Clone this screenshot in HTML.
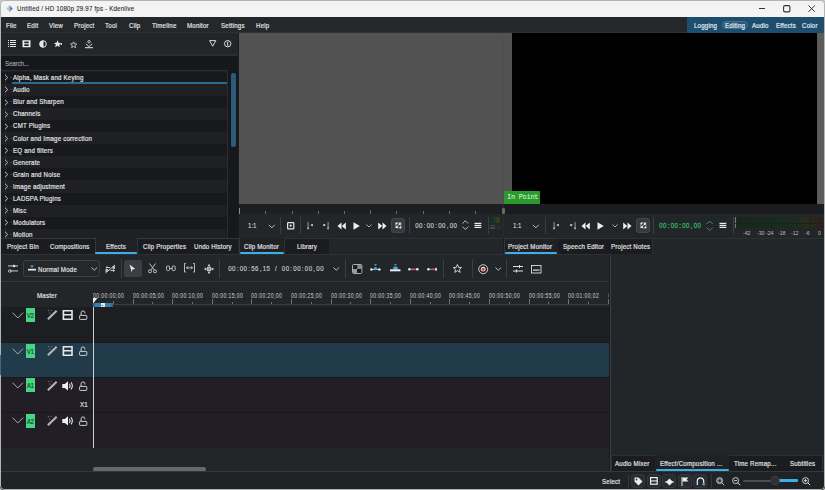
<!DOCTYPE html>
<html><head><meta charset="utf-8">
<style>
*{margin:0;padding:0;box-sizing:border-box}
html{width:825px;height:490px;overflow:hidden;background:#d4d4d4}
body{width:825px;height:490px;overflow:hidden;background:#232629;border-radius:4px;position:relative;font-family:"Liberation Sans",sans-serif;font-size:7px;color:#e8e8e8}
.a{position:absolute}
.t{position:absolute;white-space:pre;line-height:10px;height:10px;transform-origin:0 0}
.m{font-family:"Liberation Mono",monospace}
svg{position:absolute;overflow:visible}
</style></head><body>
<div class="a" style="left:0px;top:0px;width:825px;height:17px;background:#f3f3f3;"></div>
<svg style="left:5px;top:4px;" width="9" height="9" viewBox="0 0 9 9"><path d="M4.2 1.8 L1.4 4.6 L4.2 7.4Z" fill="#9dcaf2"/><path d="M5 1.8 L7.9 4.6 L5 7.4Z" fill="#4f86cc"/><rect x="4.2" y="1" width="0.8" height="7.2" fill="#f0a090"/></svg>
<div class="t" style="left:17.3px;top:4.1px;color:#262626;font-size:8px;letter-spacing:0.24px;transform:scaleX(0.77);-webkit-text-stroke:0.2px currentColor;-webkit-text-stroke:0.1px #262626;">Untitled / HD 1080p 29.97 fps - Kdenlive</div>
<div class="a" style="left:759px;top:8px;width:6px;height:1px;background:#333;"></div>
<svg style="left:783px;top:5px;" width="8" height="8" viewBox="0 0 8 8"><rect x="0.6" y="0.6" width="6.3" height="6.3" rx="1.3" fill="none" stroke="#333" stroke-width="1.1"/></svg>
<svg style="left:808px;top:5px;" width="8" height="8" viewBox="0 0 8 8"><path d="M0.5 0.5 L6.8 6.8 M6.8 0.5 L0.5 6.8" stroke="#333" stroke-width="1"/></svg>
<div class="a" style="left:0px;top:17px;width:825px;height:15px;background:#25282b;"></div>
<div class="a" style="left:0px;top:32px;width:825px;height:1px;background:#2e3134;"></div>
<div class="t" style="left:6px;top:20.8px;color:#e4e4e4;font-size:8px;letter-spacing:0.24px;transform:scaleX(0.77);-webkit-text-stroke:0.2px currentColor;">File</div>
<div class="t" style="left:27px;top:20.8px;color:#e4e4e4;font-size:8px;letter-spacing:0.24px;transform:scaleX(0.77);-webkit-text-stroke:0.2px currentColor;">Edit</div>
<div class="t" style="left:49px;top:20.8px;color:#e4e4e4;font-size:8px;letter-spacing:0.24px;transform:scaleX(0.77);-webkit-text-stroke:0.2px currentColor;">View</div>
<div class="t" style="left:73.5px;top:20.8px;color:#e4e4e4;font-size:8px;letter-spacing:0.24px;transform:scaleX(0.77);-webkit-text-stroke:0.2px currentColor;">Project</div>
<div class="t" style="left:105px;top:20.8px;color:#e4e4e4;font-size:8px;letter-spacing:0.24px;transform:scaleX(0.77);-webkit-text-stroke:0.2px currentColor;">Tool</div>
<div class="t" style="left:128.5px;top:20.8px;color:#e4e4e4;font-size:8px;letter-spacing:0.24px;transform:scaleX(0.77);-webkit-text-stroke:0.2px currentColor;">Clip</div>
<div class="t" style="left:151.5px;top:20.8px;color:#e4e4e4;font-size:8px;letter-spacing:0.24px;transform:scaleX(0.77);-webkit-text-stroke:0.2px currentColor;">Timeline</div>
<div class="t" style="left:187px;top:20.8px;color:#e4e4e4;font-size:8px;letter-spacing:0.24px;transform:scaleX(0.77);-webkit-text-stroke:0.2px currentColor;">Monitor</div>
<div class="t" style="left:221px;top:20.8px;color:#e4e4e4;font-size:8px;letter-spacing:0.24px;transform:scaleX(0.77);-webkit-text-stroke:0.2px currentColor;">Settings</div>
<div class="t" style="left:256px;top:20.8px;color:#e4e4e4;font-size:8px;letter-spacing:0.24px;transform:scaleX(0.77);-webkit-text-stroke:0.2px currentColor;">Help</div>
<div class="a" style="left:687px;top:17px;width:138px;height:15.5px;background:#1d4e6d;"></div>
<div class="a" style="left:722.3px;top:21.3px;width:25.3px;height:8.2px;background:#285a79;border:1px solid #41718f;border-radius:4px"></div>
<div class="t" style="left:694px;top:20.6px;color:#e6eef3;font-size:8px;letter-spacing:0.24px;transform:scaleX(0.77);-webkit-text-stroke:0.2px currentColor;">Logging</div>
<div class="t" style="left:725px;top:20.6px;color:#e6eef3;font-size:8px;letter-spacing:0.24px;transform:scaleX(0.77);-webkit-text-stroke:0.2px currentColor;">Editing</div>
<div class="t" style="left:752px;top:20.6px;color:#e6eef3;font-size:8px;letter-spacing:0.24px;transform:scaleX(0.77);-webkit-text-stroke:0.2px currentColor;">Audio</div>
<div class="t" style="left:776px;top:20.6px;color:#e6eef3;font-size:8px;letter-spacing:0.24px;transform:scaleX(0.77);-webkit-text-stroke:0.2px currentColor;">Effects</div>
<div class="t" style="left:802px;top:20.6px;color:#e6eef3;font-size:8px;letter-spacing:0.24px;transform:scaleX(0.77);-webkit-text-stroke:0.2px currentColor;">Color</div>
<div class="a" style="left:0px;top:33px;width:238px;height:21px;background:#232629;"></div>
<div class="a" style="left:0px;top:54px;width:238px;height:17px;background:#2a2d31;border-radius:2px"></div>
<div class="a" style="left:1px;top:55.5px;width:237px;height:14px;background:#16171a;border-radius:2px"></div>
<div class="t" style="left:5px;top:58.6px;color:#9a9fa4;font-size:8px;letter-spacing:0.24px;transform:scaleX(0.77);-webkit-text-stroke:0.2px currentColor;letter-spacing:-0.15px;">Search...</div>
<div class="a" style="left:0px;top:71px;width:238px;height:167px;background:#1e1f22;"></div>
<div class="a" style="left:0px;top:71.5px;width:227px;height:12.3px;background:#18191c;"></div>
<div class="a" style="left:0px;top:83.6px;width:227px;height:12.3px;background:#1f2023;"></div>
<div class="a" style="left:0px;top:95.7px;width:227px;height:12.3px;background:#18191c;"></div>
<div class="a" style="left:0px;top:107.8px;width:227px;height:12.3px;background:#1f2023;"></div>
<div class="a" style="left:0px;top:119.9px;width:227px;height:12.3px;background:#18191c;"></div>
<div class="a" style="left:0px;top:132.0px;width:227px;height:12.3px;background:#1f2023;"></div>
<div class="a" style="left:0px;top:144.1px;width:227px;height:12.3px;background:#18191c;"></div>
<div class="a" style="left:0px;top:156.2px;width:227px;height:12.3px;background:#1f2023;"></div>
<div class="a" style="left:0px;top:168.3px;width:227px;height:12.3px;background:#18191c;"></div>
<div class="a" style="left:0px;top:180.4px;width:227px;height:12.3px;background:#1f2023;"></div>
<div class="a" style="left:0px;top:192.5px;width:227px;height:12.3px;background:#18191c;"></div>
<div class="a" style="left:0px;top:204.6px;width:227px;height:12.3px;background:#1f2023;"></div>
<div class="a" style="left:0px;top:216.7px;width:227px;height:12.3px;background:#18191c;"></div>
<div class="a" style="left:0px;top:228.8px;width:227px;height:12.3px;background:#1f2023;"></div>
<div class="a" style="left:5px;top:71px;width:1px;height:167px;background:;background:repeating-linear-gradient(180deg,#34373a 0 1px,transparent 1px 2px)"></div>
<svg style="left:4px;top:74.34px;" width="5" height="7" viewBox="0 0 5 7"><path d="M1 0.8 L3.8 3.5 L1 6.2" fill="none" stroke="#c8c8c8" stroke-width="0.9"/></svg>
<div class="a" style="left:10px;top:77.1px;width:2px;height:1px;background:#3a3c3f;"></div>
<div class="t" style="left:13px;top:73.14px;color:#e6e6e6;font-size:8px;letter-spacing:0.24px;transform:scaleX(0.77);-webkit-text-stroke:0.2px currentColor;">Alpha, Mask and Keying</div>
<svg style="left:4px;top:86.42px;" width="5" height="7" viewBox="0 0 5 7"><path d="M1 0.8 L3.8 3.5 L1 6.2" fill="none" stroke="#c8c8c8" stroke-width="0.9"/></svg>
<div class="a" style="left:10px;top:89.2px;width:2px;height:1px;background:#3a3c3f;"></div>
<div class="t" style="left:13px;top:85.22px;color:#e6e6e6;font-size:8px;letter-spacing:0.24px;transform:scaleX(0.77);-webkit-text-stroke:0.2px currentColor;">Audio</div>
<svg style="left:4px;top:98.5px;" width="5" height="7" viewBox="0 0 5 7"><path d="M1 0.8 L3.8 3.5 L1 6.2" fill="none" stroke="#c8c8c8" stroke-width="0.9"/></svg>
<div class="a" style="left:10px;top:101.3px;width:2px;height:1px;background:#3a3c3f;"></div>
<div class="t" style="left:13px;top:97.3px;color:#e6e6e6;font-size:8px;letter-spacing:0.24px;transform:scaleX(0.77);-webkit-text-stroke:0.2px currentColor;">Blur and Sharpen</div>
<svg style="left:4px;top:110.58px;" width="5" height="7" viewBox="0 0 5 7"><path d="M1 0.8 L3.8 3.5 L1 6.2" fill="none" stroke="#c8c8c8" stroke-width="0.9"/></svg>
<div class="a" style="left:10px;top:113.4px;width:2px;height:1px;background:#3a3c3f;"></div>
<div class="t" style="left:13px;top:109.38px;color:#e6e6e6;font-size:8px;letter-spacing:0.24px;transform:scaleX(0.77);-webkit-text-stroke:0.2px currentColor;">Channels</div>
<svg style="left:4px;top:122.66000000000001px;" width="5" height="7" viewBox="0 0 5 7"><path d="M1 0.8 L3.8 3.5 L1 6.2" fill="none" stroke="#c8c8c8" stroke-width="0.9"/></svg>
<div class="a" style="left:10px;top:125.5px;width:2px;height:1px;background:#3a3c3f;"></div>
<div class="t" style="left:13px;top:121.46px;color:#e6e6e6;font-size:8px;letter-spacing:0.24px;transform:scaleX(0.77);-webkit-text-stroke:0.2px currentColor;">CMT Plugins</div>
<svg style="left:4px;top:134.73999999999998px;" width="5" height="7" viewBox="0 0 5 7"><path d="M1 0.8 L3.8 3.5 L1 6.2" fill="none" stroke="#c8c8c8" stroke-width="0.9"/></svg>
<div class="a" style="left:10px;top:137.5px;width:2px;height:1px;background:#3a3c3f;"></div>
<div class="t" style="left:13px;top:133.54px;color:#e6e6e6;font-size:8px;letter-spacing:0.24px;transform:scaleX(0.77);-webkit-text-stroke:0.2px currentColor;">Color and Image correction</div>
<svg style="left:4px;top:146.82px;" width="5" height="7" viewBox="0 0 5 7"><path d="M1 0.8 L3.8 3.5 L1 6.2" fill="none" stroke="#c8c8c8" stroke-width="0.9"/></svg>
<div class="a" style="left:10px;top:149.6px;width:2px;height:1px;background:#3a3c3f;"></div>
<div class="t" style="left:13px;top:145.62px;color:#e6e6e6;font-size:8px;letter-spacing:0.24px;transform:scaleX(0.77);-webkit-text-stroke:0.2px currentColor;">EQ and filters</div>
<svg style="left:4px;top:158.89999999999998px;" width="5" height="7" viewBox="0 0 5 7"><path d="M1 0.8 L3.8 3.5 L1 6.2" fill="none" stroke="#c8c8c8" stroke-width="0.9"/></svg>
<div class="a" style="left:10px;top:161.7px;width:2px;height:1px;background:#3a3c3f;"></div>
<div class="t" style="left:13px;top:157.7px;color:#e6e6e6;font-size:8px;letter-spacing:0.24px;transform:scaleX(0.77);-webkit-text-stroke:0.2px currentColor;">Generate</div>
<svg style="left:4px;top:170.98px;" width="5" height="7" viewBox="0 0 5 7"><path d="M1 0.8 L3.8 3.5 L1 6.2" fill="none" stroke="#c8c8c8" stroke-width="0.9"/></svg>
<div class="a" style="left:10px;top:173.8px;width:2px;height:1px;background:#3a3c3f;"></div>
<div class="t" style="left:13px;top:169.78px;color:#e6e6e6;font-size:8px;letter-spacing:0.24px;transform:scaleX(0.77);-webkit-text-stroke:0.2px currentColor;">Grain and Noise</div>
<svg style="left:4px;top:183.06px;" width="5" height="7" viewBox="0 0 5 7"><path d="M1 0.8 L3.8 3.5 L1 6.2" fill="none" stroke="#c8c8c8" stroke-width="0.9"/></svg>
<div class="a" style="left:10px;top:185.9px;width:2px;height:1px;background:#3a3c3f;"></div>
<div class="t" style="left:13px;top:181.86px;color:#e6e6e6;font-size:8px;letter-spacing:0.24px;transform:scaleX(0.77);-webkit-text-stroke:0.2px currentColor;">Image adjustment</div>
<svg style="left:4px;top:195.14px;" width="5" height="7" viewBox="0 0 5 7"><path d="M1 0.8 L3.8 3.5 L1 6.2" fill="none" stroke="#c8c8c8" stroke-width="0.9"/></svg>
<div class="a" style="left:10px;top:197.9px;width:2px;height:1px;background:#3a3c3f;"></div>
<div class="t" style="left:13px;top:193.94px;color:#e6e6e6;font-size:8px;letter-spacing:0.24px;transform:scaleX(0.77);-webkit-text-stroke:0.2px currentColor;">LADSPA Plugins</div>
<svg style="left:4px;top:207.21999999999997px;" width="5" height="7" viewBox="0 0 5 7"><path d="M1 0.8 L3.8 3.5 L1 6.2" fill="none" stroke="#c8c8c8" stroke-width="0.9"/></svg>
<div class="a" style="left:10px;top:210.0px;width:2px;height:1px;background:#3a3c3f;"></div>
<div class="t" style="left:13px;top:206.02px;color:#e6e6e6;font-size:8px;letter-spacing:0.24px;transform:scaleX(0.77);-webkit-text-stroke:0.2px currentColor;">Misc</div>
<svg style="left:4px;top:219.3px;" width="5" height="7" viewBox="0 0 5 7"><path d="M1 0.8 L3.8 3.5 L1 6.2" fill="none" stroke="#c8c8c8" stroke-width="0.9"/></svg>
<div class="a" style="left:10px;top:222.1px;width:2px;height:1px;background:#3a3c3f;"></div>
<div class="t" style="left:13px;top:218.1px;color:#e6e6e6;font-size:8px;letter-spacing:0.24px;transform:scaleX(0.77);-webkit-text-stroke:0.2px currentColor;">Modulators</div>
<svg style="left:4px;top:231.38px;" width="5" height="7" viewBox="0 0 5 7"><path d="M1 0.8 L3.8 3.5 L1 6.2" fill="none" stroke="#c8c8c8" stroke-width="0.9"/></svg>
<div class="a" style="left:10px;top:234.2px;width:2px;height:1px;background:#3a3c3f;"></div>
<div class="t" style="left:13px;top:230.18px;color:#e6e6e6;font-size:8px;letter-spacing:0.24px;transform:scaleX(0.77);-webkit-text-stroke:0.2px currentColor;">Motion</div>
<div class="a" style="left:11.5px;top:82px;width:216px;height:2px;background:#2d6b93;"></div>
<div class="a" style="left:228px;top:70px;width:10px;height:168px;background:#17181b;"></div>
<div class="a" style="left:227px;top:70px;width:1px;height:168px;background:#2a2c2f;"></div>
<div class="a" style="left:231px;top:73px;width:4.5px;height:74px;background:#2b5a7a;border-radius:2px"></div>
<div class="a" style="left:0px;top:238px;width:238px;height:16px;background:#1b1c1f;"></div>
<div class="a" style="left:0px;top:238px;width:238px;height:1px;background:#33363a;"></div>
<div class="a" style="left:94.5px;top:238px;width:43px;height:16px;background:#1f2124;border-left:1px solid #33363a;border-right:1px solid #33363a"></div>
<div class="a" style="left:95px;top:252px;width:42px;height:2px;background:#3daee9;border-radius:1px"></div>
<div class="t" style="left:6.5px;top:241.5px;color:#e4e4e4;font-size:8px;letter-spacing:0.24px;transform:scaleX(0.77);-webkit-text-stroke:0.2px currentColor;">Project Bin</div>
<div class="t" style="left:49.5px;top:241.5px;color:#e4e4e4;font-size:8px;letter-spacing:0.24px;transform:scaleX(0.77);-webkit-text-stroke:0.2px currentColor;">Compositions</div>
<div class="t" style="left:106.2px;top:241.5px;color:#e4e4e4;font-size:8px;letter-spacing:0.24px;transform:scaleX(0.77);-webkit-text-stroke:0.2px currentColor;">Effects</div>
<div class="t" style="left:142.5px;top:241.5px;color:#e4e4e4;font-size:8px;letter-spacing:0.24px;transform:scaleX(0.77);-webkit-text-stroke:0.2px currentColor;">Clip Properties</div>
<div class="t" style="left:193.5px;top:241.5px;color:#e4e4e4;font-size:8px;letter-spacing:0.24px;transform:scaleX(0.77);-webkit-text-stroke:0.2px currentColor;">Undo History</div>
<div class="a" style="left:238px;top:33px;width:1px;height:205px;background:#1b1c1f;"></div>
<div class="a" style="left:239px;top:33px;width:273px;height:171px;background:#525252;"></div>
<div class="a" style="left:503px;top:33px;width:1px;height:171px;background:#4f4f4f;"></div>
<div class="a" style="left:512px;top:33px;width:305px;height:171px;background:#000;"></div>
<div class="a" style="left:817px;top:33px;width:8px;height:171px;background:#5c5c5c;"></div>
<div class="a" style="left:239px;top:204px;width:264px;height:10px;background:#1d1f22;"></div>
<div class="a" style="left:504px;top:204px;width:321px;height:10px;background:#1b1c1f;"></div>
<div class="a" style="left:265px;top:211.0px;width:1px;height:2.5px;background:#66686b;"></div>
<div class="a" style="left:292px;top:211.0px;width:1px;height:2.5px;background:#66686b;"></div>
<div class="a" style="left:318px;top:211.0px;width:1px;height:2.5px;background:#66686b;"></div>
<div class="a" style="left:344px;top:211.0px;width:1px;height:2.5px;background:#66686b;"></div>
<div class="a" style="left:370px;top:209.5px;width:1px;height:4px;background:#66686b;"></div>
<div class="a" style="left:396px;top:211.0px;width:1px;height:2.5px;background:#66686b;"></div>
<div class="a" style="left:423px;top:211.0px;width:1px;height:2.5px;background:#66686b;"></div>
<div class="a" style="left:449px;top:211.0px;width:1px;height:2.5px;background:#66686b;"></div>
<div class="a" style="left:475px;top:211.0px;width:1px;height:2.5px;background:#66686b;"></div>
<div class="a" style="left:239px;top:208px;width:1px;height:6px;background:#8a8a8a;"></div>
<div class="a" style="left:503px;top:204px;width:1px;height:34px;background:#2a2c30;"></div>
<div class="a" style="left:502px;top:208px;width:3px;height:5.5px;background:#6a6a6a;border-radius:1.2px"></div>
<div class="a" style="left:504px;top:191px;width:36px;height:13px;background:#2a9a2a;"></div>
<div class="t m" style="left:507px;top:192.3px;color:#e8f5e8;font-size:7px;letter-spacing:-0.3px;">In Point</div>
<div class="a" style="left:239px;top:214px;width:264px;height:24px;background:#232629;"></div>
<div class="a" style="left:504px;top:214px;width:321px;height:24px;background:#232629;"></div>
<div class="t" style="left:248.2px;top:221.4px;color:#e0e0e0;font-size:8px;letter-spacing:0px;transform:scaleX(0.76);-webkit-text-stroke:0.05px #e0e0e0;">1:1</div>
<svg style="left:268px;top:223.5px;" width="8" height="5" viewBox="0 0 8 5"><path d="M0.8 0.8 L3.8 3.8 L6.8 0.8" fill="none" stroke="#cfcfcf" stroke-width="0.9"/></svg>
<div class="a" style="left:280px;top:217px;width:1px;height:17px;background:#3a3d41;"></div>
<svg style="left:286.8px;top:222px;" width="8" height="8" viewBox="0 0 8 8"><rect x="0.6" y="0.6" width="6.2" height="6.2" rx="0.6" fill="none" stroke="#e4e4e4" stroke-width="1.2"/><rect x="2.6" y="2.6" width="2" height="2" fill="#e4e4e4"/></svg>
<div class="a" style="left:300px;top:217px;width:1px;height:17px;background:#3a3d41;"></div>
<div class="a" style="left:0px;top:254px;width:610px;height:1px;background:#2e3134;"></div>
<div class="a" style="left:0px;top:255px;width:610px;height:26px;background:#232629;"></div>
<div class="a" style="left:0px;top:281px;width:610px;height:1px;background:#34373b;"></div>
<svg style="left:8px;top:40px;" width="8" height="8" viewBox="0 0 8 8"><rect x="0" y="0" width="1" height="1" fill="#e8e8e8"/><rect x="2" y="0" width="6" height="1" fill="#e8e8e8"/><rect x="0" y="2" width="1" height="1" fill="#e8e8e8"/><rect x="2" y="2" width="6" height="1" fill="#e8e8e8"/><rect x="0" y="4" width="1" height="1" fill="#e8e8e8"/><rect x="2" y="4" width="6" height="1" fill="#e8e8e8"/><rect x="0" y="6" width="1" height="1" fill="#e8e8e8"/><rect x="2" y="6" width="6" height="1" fill="#e8e8e8"/></svg>
<svg style="left:22px;top:40px;" width="9" height="8" viewBox="0 0 9 8"><path fill-rule="evenodd" fill="#eee" d="M0.5 0.2 H8.5 V7.2 H0.5Z M2.3 1.4 H6.7 V3.2 H2.3Z M2.3 4.2 H6.7 V6 H2.3Z"/></svg>
<svg style="left:39px;top:40px;" width="8" height="8" viewBox="0 0 8 8"><circle cx="4" cy="4" r="3.3" fill="none" stroke="#e8e8e8" stroke-width="1"/><path d="M4 0.7 A3.3 3.3 0 0 0 4 7.3Z" fill="#e8e8e8"/><rect x="3.6" y="0.7" width="0.9" height="6.6" fill="#e8e8e8"/></svg>
<svg style="left:54px;top:40px;" width="8" height="8" viewBox="0 0 8 8"><path d="M3.5 0.3 L4.5 2.8 L7.2 2.9 L5.1 4.6 L5.9 7.3 L3.5 5.8 L1.1 7.3 L1.9 4.6 L-0.2 2.9 L2.5 2.8Z" fill="#e8e8e8"/><path d="M5 4 L8 4 L7 3 M8 4 L7 5" stroke="#e8e8e8" stroke-width="0.8" fill="none"/></svg>
<svg style="left:69.5px;top:40.5px;" width="8" height="8" viewBox="0 0 8 8"><path d="M3.6 0.8 L4.5 2.9 L6.7 3 L5 4.4 L5.6 6.7 L3.6 5.4 L1.6 6.7 L2.2 4.4 L0.5 3 L2.7 2.9Z" fill="none" stroke="#d8d8d8" stroke-width="0.8"/></svg>
<svg style="left:85px;top:39.5px;" width="8" height="9" viewBox="0 0 8 9"><circle cx="4" cy="1.7" r="1.2" fill="none" stroke="#e8e8e8" stroke-width="0.8"/><path d="M0.8 3.8 L4 6.6 L7.2 3.8" fill="none" stroke="#e8e8e8" stroke-width="0.9"/><rect x="0" y="7.2" width="8" height="1" fill="#e8e8e8"/></svg>
<svg style="left:209px;top:40px;" width="8" height="7" viewBox="0 0 8 7"><path d="M0.6 0.6 L6.8 0.6 L3.7 6.2Z" fill="none" stroke="#e8e8e8" stroke-width="0.9" stroke-linejoin="round"/></svg>
<svg style="left:224px;top:40px;" width="8" height="8" viewBox="0 0 8 8"><circle cx="3.7" cy="3.7" r="3.2" fill="none" stroke="#e8e8e8" stroke-width="0.9"/><rect x="3.2" y="1.6" width="1" height="4.2" fill="#e8e8e8"/></svg>
<div class="a" style="left:239px;top:238px;width:586px;height:16px;background:#232629;"></div>
<div class="a" style="left:284px;top:238px;width:45px;height:16px;background:#1b1c1f;border-top:1px solid #2e3134;border-left:1px solid #2e3134"></div>
<div class="a" style="left:558px;top:238px;width:95px;height:16px;background:#1b1c1f;border-top:1px solid #2e3134;border-right:1px solid #2e3134"></div>
<div class="a" style="left:284px;top:238px;width:219px;height:1px;background:#2e3134;"></div>
<div class="a" style="left:558px;top:238px;width:267px;height:1px;background:#2e3134;"></div>
<div class="a" style="left:239px;top:238px;width:45px;height:16px;background:#1f2124;border-left:1px solid #33363a"></div>
<div class="a" style="left:239.5px;top:252px;width:44.5px;height:2px;background:#3daee9;border-radius:1px"></div>
<div class="t" style="left:243.6px;top:241.7px;color:#e4e4e4;font-size:8px;letter-spacing:0.24px;transform:scaleX(0.77);-webkit-text-stroke:0.2px currentColor;">Clip Monitor</div>
<div class="t" style="left:297px;top:241.7px;color:#e4e4e4;font-size:8px;letter-spacing:0.24px;transform:scaleX(0.77);-webkit-text-stroke:0.2px currentColor;">Library</div>
<div class="a" style="left:503px;top:238px;width:1px;height:16px;background:#1b1c1f;"></div>
<div class="a" style="left:504px;top:238px;width:54px;height:16px;background:#1f2124;border-left:1px solid #33363a;border-top:1px solid #33363a"></div>
<div class="a" style="left:504.5px;top:252px;width:52.5px;height:2px;background:#3daee9;border-radius:1px"></div>
<div class="t" style="left:508px;top:241.7px;color:#e4e4e4;font-size:8px;letter-spacing:0.24px;transform:scaleX(0.77);-webkit-text-stroke:0.2px currentColor;">Project Monitor</div>
<div class="t" style="left:562.5px;top:241.7px;color:#e4e4e4;font-size:8px;letter-spacing:0.24px;transform:scaleX(0.77);-webkit-text-stroke:0.2px currentColor;">Speech Editor</div>
<div class="t" style="left:611px;top:241.7px;color:#e4e4e4;font-size:8px;letter-spacing:0.24px;transform:scaleX(0.77);-webkit-text-stroke:0.2px currentColor;">Project Notes</div>
<svg style="left:306px;top:221px;" width="8" height="10" viewBox="0 0 8 10"><rect x="1.6" y="1" width="1" height="6.5" fill="#9a9a9a"/><circle cx="2.1" cy="7.3" r="1.1" fill="#a8a8a8"/><path d="M4.2 4.1 L6.6 2.9 L6.6 5.3Z" fill="#c8c8c8"/><circle cx="6.2" cy="4.1" r="0.9" fill="#c8c8c8"/></svg>
<svg style="left:322px;top:221px;" width="8" height="10" viewBox="0 0 8 10"><rect x="5.6" y="1" width="1" height="6.5" fill="#9a9a9a"/><circle cx="6.1" cy="7.3" r="1.1" fill="#a8a8a8"/><path d="M4 4.1 L1.6 2.9 L1.6 5.3Z" fill="#d0d0d0"/><circle cx="2" cy="4.1" r="0.9" fill="#d0d0d0"/></svg>
<svg style="left:337px;top:221.5px;" width="9" height="8" viewBox="0 0 9 8"><path d="M4.5 0.5 L0.5 4 L4.5 7.5Z M8.8 0.5 L4.8 4 L8.8 7.5Z" fill="#f0f0f0"/></svg>
<svg style="left:353px;top:221.5px;" width="7" height="8" viewBox="0 0 7 8"><path d="M0.5 0.3 L6.8 4 L0.5 7.7Z" fill="#f0f0f0"/></svg>
<svg style="left:366px;top:223.8px;" width="6" height="4" viewBox="0 0 6 4"><path d="M0.5 0.5 L3 3 L5.5 0.5" fill="none" stroke="#cfcfcf" stroke-width="0.8"/></svg>
<svg style="left:378.4px;top:221.5px;" width="9" height="8" viewBox="0 0 9 8"><path d="M0.2 0.5 L4.2 4 L0.2 7.5Z M4.5 0.5 L8.5 4 L4.5 7.5Z" fill="#f0f0f0"/></svg>
<div class="a" style="left:391px;top:218.3px;width:14.2px;height:14.3px;background:#36393d;border:1px solid #44474b;border-radius:3px"></div>
<svg style="left:394.5px;top:221.8px;" width="8" height="8" viewBox="0 0 8 8"><path d="M0.8 1.2 L0.8 5.8 L5.8 5.8 L5.8 0.8 L1.2 0.8" fill="none" stroke="#bdbdbd" stroke-width="0.7"/><path d="M0.8 5.8 L6 0.6" stroke="#ddd" stroke-width="0.8"/><circle cx="1.5" cy="1.5" r="1" fill="#eee"/><circle cx="5.5" cy="5.6" r="1" fill="#eee"/><circle cx="2" cy="5" r="0.9" fill="#fff"/><circle cx="4.8" cy="2" r="0.9" fill="#fff"/></svg>
<div class="a" style="left:409px;top:217px;width:1px;height:17px;background:#3a3d41;"></div>
<div class="t" style="left:414.6px;top:221.4px;color:#cfcfcf;font-size:7.4px;transform:scaleX(0.82);-webkit-text-stroke:0.15px #cfcfcf;"><span style="display:inline-block;width:4.683px;text-align:center">0</span><span style="display:inline-block;width:4.683px;text-align:center">0</span><span style="display:inline-block;width:4.683px;text-align:center">:</span><span style="display:inline-block;width:4.683px;text-align:center">0</span><span style="display:inline-block;width:4.683px;text-align:center">0</span><span style="display:inline-block;width:4.683px;text-align:center">:</span><span style="display:inline-block;width:4.683px;text-align:center">0</span><span style="display:inline-block;width:4.683px;text-align:center">0</span><span style="display:inline-block;width:4.683px;text-align:center">,</span><span style="display:inline-block;width:4.683px;text-align:center">0</span><span style="display:inline-block;width:4.683px;text-align:center">0</span></div>
<svg style="left:461.5px;top:220px;" width="7" height="11" viewBox="0 0 7 11"><path d="M0.5 3.5 L3.3 0.7 L6.1 3.5 M0.5 6.7 L3.3 9.5 L6.1 6.7" fill="none" stroke="#d0d0d0" stroke-width="0.9"/></svg>
<svg style="left:474px;top:221px;" width="8" height="8" viewBox="0 0 8 8"><rect x="0.5" y="1.8" width="6.8" height="1.2" fill="#eee"/><rect x="0.5" y="3.8" width="6.8" height="1.2" fill="#eee"/><rect x="0.5" y="5.8" width="6.8" height="1.2" fill="#eee"/></svg>
<div class="a" style="left:488px;top:217px;width:1px;height:17px;background:#3a3d41;"></div>
<div class="a" style="left:491.4px;top:217.4px;width:8.6px;height:5.2px;background:;background:linear-gradient(90deg,#1a2e20,#1c4024 60%,#3a4220 80%,#4a2420)"></div>
<div class="a" style="left:490.2px;top:225px;width:5px;height:1px;background:#45484b;"></div>
<div class="a" style="left:490.2px;top:226.5px;width:5px;height:1px;background:#45484b;"></div>
<div class="a" style="left:490.2px;top:228px;width:5px;height:1px;background:#45484b;"></div>
<svg style="left:496.5px;top:225px;" width="4" height="5" viewBox="0 0 4 5"><ellipse cx="2" cy="2.3" rx="1.4" ry="1.8" fill="none" stroke="#3c3f42" stroke-width="0.7"/></svg>
<div class="t" style="left:512.8px;top:221.4px;color:#e0e0e0;font-size:8px;letter-spacing:0px;transform:scaleX(0.76);-webkit-text-stroke:0.05px #e0e0e0;">1:1</div>
<svg style="left:532.3px;top:223.5px;" width="8" height="5" viewBox="0 0 8 5"><path d="M0.8 0.8 L3.8 3.8 L6.8 0.8" fill="none" stroke="#cfcfcf" stroke-width="0.9"/></svg>
<div class="a" style="left:545px;top:217px;width:1px;height:17px;background:#3a3d41;"></div>
<svg style="left:552px;top:221px;" width="8" height="10" viewBox="0 0 8 10"><rect x="1.6" y="1" width="1" height="6.5" fill="#9a9a9a"/><circle cx="2.1" cy="7.3" r="1.1" fill="#a8a8a8"/><path d="M4.2 4.1 L6.6 2.9 L6.6 5.3Z" fill="#c8c8c8"/><circle cx="6.2" cy="4.1" r="0.9" fill="#c8c8c8"/></svg>
<svg style="left:569px;top:221px;" width="8" height="10" viewBox="0 0 8 10"><rect x="5.6" y="1" width="1" height="6.5" fill="#9a9a9a"/><circle cx="6.1" cy="7.3" r="1.1" fill="#a8a8a8"/><path d="M4 4.1 L1.6 2.9 L1.6 5.3Z" fill="#d0d0d0"/><circle cx="2" cy="4.1" r="0.9" fill="#d0d0d0"/></svg>
<svg style="left:581px;top:221.5px;" width="9" height="8" viewBox="0 0 9 8"><path d="M4.5 0.5 L0.5 4 L4.5 7.5Z M8.8 0.5 L4.8 4 L8.8 7.5Z" fill="#f0f0f0"/></svg>
<svg style="left:597px;top:221.5px;" width="7" height="8" viewBox="0 0 7 8"><path d="M0.5 0.3 L6.8 4 L0.5 7.7Z" fill="#f0f0f0"/></svg>
<svg style="left:612px;top:223.8px;" width="6" height="4" viewBox="0 0 6 4"><path d="M0.5 0.5 L3 3 L5.5 0.5" fill="none" stroke="#cfcfcf" stroke-width="0.8"/></svg>
<svg style="left:623px;top:221.5px;" width="9" height="8" viewBox="0 0 9 8"><path d="M0.2 0.5 L4.2 4 L0.2 7.5Z M4.5 0.5 L8.5 4 L4.5 7.5Z" fill="#f0f0f0"/></svg>
<div class="a" style="left:636px;top:218.3px;width:14.2px;height:14.3px;background:#36393d;border:1px solid #44474b;border-radius:3px"></div>
<svg style="left:639.5px;top:221.8px;" width="8" height="8" viewBox="0 0 8 8"><path d="M0.8 1.2 L0.8 5.8 L5.8 5.8 L5.8 0.8 L1.2 0.8" fill="none" stroke="#bdbdbd" stroke-width="0.7"/><path d="M0.8 5.8 L6 0.6" stroke="#ddd" stroke-width="0.8"/><circle cx="1.5" cy="1.5" r="1" fill="#eee"/><circle cx="5.5" cy="5.6" r="1" fill="#eee"/><circle cx="2" cy="5" r="0.9" fill="#fff"/><circle cx="4.8" cy="2" r="0.9" fill="#fff"/></svg>
<div class="a" style="left:653px;top:217px;width:1px;height:17px;background:#3a3d41;"></div>
<div class="t" style="left:659.4px;top:221.4px;color:#2fa85e;font-size:7.4px;transform:scaleX(0.82);-webkit-text-stroke:0.35px #2fa85e;"><span style="display:inline-block;width:4.683px;text-align:center">0</span><span style="display:inline-block;width:4.683px;text-align:center">0</span><span style="display:inline-block;width:4.683px;text-align:center">:</span><span style="display:inline-block;width:4.683px;text-align:center">0</span><span style="display:inline-block;width:4.683px;text-align:center">0</span><span style="display:inline-block;width:4.683px;text-align:center">:</span><span style="display:inline-block;width:4.683px;text-align:center">0</span><span style="display:inline-block;width:4.683px;text-align:center">0</span><span style="display:inline-block;width:4.683px;text-align:center">,</span><span style="display:inline-block;width:4.683px;text-align:center">0</span><span style="display:inline-block;width:4.683px;text-align:center">0</span></div>
<svg style="left:706px;top:219.5px;" width="8" height="12" viewBox="0 0 8 12"><path d="M0.7 4 L3.7 1 L6.7 4 M0.7 7.5 L3.7 10.5 L6.7 7.5" fill="none" stroke="#2a9a55" stroke-width="1"/></svg>
<svg style="left:719px;top:220.8px;" width="8" height="8" viewBox="0 0 8 8"><rect x="0.5" y="1.8" width="6.8" height="1.2" fill="#eee"/><rect x="0.5" y="3.8" width="6.8" height="1.2" fill="#eee"/><rect x="0.5" y="5.8" width="6.8" height="1.2" fill="#eee"/></svg>
<div class="a" style="left:733px;top:217px;width:1px;height:17px;background:#3a3d41;"></div>
<div class="a" style="left:734.5px;top:217px;width:1.5px;height:11px;background:#7a7a7a;"></div>
<div class="a" style="left:734.5px;top:222.5px;width:1.5px;height:0.8px;background:#333;"></div>
<div class="a" style="left:737px;top:217.4px;width:85px;height:11px;background:;background:linear-gradient(90deg,#16281a 0%,#182e1c 65%,#2a2c1a 82%,#2e1e1c 100%)"></div>
<div class="a" style="left:737px;top:222.6px;width:85px;height:0.8px;background:#1c1f22;"></div>
<div class="a" style="left:749px;top:217.4px;width:0.7px;height:11px;background:#1d2420;"></div>
<div class="a" style="left:763px;top:217.4px;width:0.7px;height:11px;background:#1d2420;"></div>
<div class="a" style="left:771px;top:217.4px;width:0.7px;height:11px;background:#1d2420;"></div>
<div class="a" style="left:784px;top:217.4px;width:0.7px;height:11px;background:#1d2420;"></div>
<div class="a" style="left:797px;top:217.4px;width:0.7px;height:11px;background:#1d2420;"></div>
<div class="a" style="left:810px;top:217.4px;width:0.7px;height:11px;background:#1d2420;"></div>
<div class="t" style="left:743px;top:228.0px;color:#bdbdbd;font-size:5.2px;letter-spacing:-0.1px;">-42</div>
<div class="t" style="left:757px;top:228.0px;color:#bdbdbd;font-size:5.2px;letter-spacing:-0.1px;">-30</div>
<div class="t" style="left:766px;top:228.0px;color:#bdbdbd;font-size:5.2px;letter-spacing:-0.1px;">-24</div>
<div class="t" style="left:778px;top:228.0px;color:#bdbdbd;font-size:5.2px;letter-spacing:-0.1px;">-18</div>
<div class="t" style="left:791px;top:228.0px;color:#bdbdbd;font-size:5.2px;letter-spacing:-0.1px;">-12</div>
<div class="t" style="left:805px;top:228.0px;color:#bdbdbd;font-size:5.2px;letter-spacing:-0.1px;">-6</div>
<div class="t" style="left:818px;top:228.0px;color:#bdbdbd;font-size:5.2px;letter-spacing:-0.1px;">0</div>
<svg style="left:8px;top:264px;" width="11" height="9" viewBox="0 0 11 9"><rect x="0" y="1.5" width="10" height="0.9" fill="#ddd"/><circle cx="6" cy="2" r="1.3" fill="#ddd"/><rect x="2" y="6.5" width="8" height="0.9" fill="#ddd"/><circle cx="1.8" cy="7" r="1.3" fill="none" stroke="#ddd" stroke-width="0.8"/></svg>
<div class="a" style="left:23px;top:260.2px;width:77px;height:16.5px;background:#25282b;border:1px solid #3c3f43;border-radius:3px"></div>
<svg style="left:28px;top:264.5px;" width="8" height="7" viewBox="0 0 8 7"><path d="M2 0.5 L6 0.5 L4 2.8Z" fill="#3daee9"/><rect x="0" y="3.8" width="8" height="1.7" fill="#eaeaea"/></svg>
<div class="t" style="left:37.5px;top:264.9px;color:#e4e4e4;font-size:8px;letter-spacing:0.24px;transform:scaleX(0.77);-webkit-text-stroke:0.2px currentColor;">Normal Mode</div>
<svg style="left:91px;top:266.5px;" width="7" height="4" viewBox="0 0 7 4"><path d="M0.5 0.5 L3.3 3.2 L6.1 0.5" fill="none" stroke="#cfcfcf" stroke-width="0.9"/></svg>
<svg style="left:105px;top:263.5px;" width="11" height="10" viewBox="0 0 11 10"><path d="M0.5 9 L10 1" stroke="#cfcfcf" stroke-width="1"/><path d="M1 3.5 L5 3.5 M1 3.5 L2.3 2.3 M1 3.5 L2.3 4.7 M5.5 6.5 L9.5 6.5 M9.5 6.5 L8.2 5.3 M9.5 6.5 L8.2 7.7" stroke="#d8d8d8" stroke-width="0.9" fill="none"/><rect x="0.5" y="5" width="2.5" height="3" fill="#bbb"/><rect x="7.5" y="2" width="2.5" height="3" fill="#bbb"/></svg>
<div class="a" style="left:121px;top:259px;width:1px;height:19px;background:#3a3d41;"></div>
<div class="a" style="left:124px;top:260px;width:18px;height:17px;background:#3b3e42;border-radius:2.5px"></div>
<svg style="left:129px;top:264px;" width="7" height="9" viewBox="0 0 7 9"><path d="M0.5 0.5 L6.3 5 L3.6 5.2 L2.8 8.3Z" fill="#eee"/></svg>
<svg style="left:148px;top:263px;" width="9" height="11" viewBox="0 0 9 11"><circle cx="2" cy="8.3" r="1.5" fill="none" stroke="#ddd" stroke-width="0.8"/><circle cx="7" cy="8.3" r="1.5" fill="none" stroke="#ddd" stroke-width="0.8"/><path d="M2.8 7 L7.5 0.5 M6.2 7 L1.5 0.5" stroke="#ddd" stroke-width="0.8"/></svg>
<svg style="left:166px;top:265px;" width="10" height="7" viewBox="0 0 10 7"><rect x="0.5" y="1" width="3" height="4.6" rx="1" fill="none" stroke="#ddd" stroke-width="0.8"/><rect x="6.2" y="1" width="3" height="4.6" rx="1" fill="none" stroke="#ddd" stroke-width="0.8"/><rect x="3.5" y="3" width="2.7" height="0.8" fill="#ddd"/></svg>
<svg style="left:184px;top:263px;" width="11" height="10" viewBox="0 0 11 10"><path d="M2 0.5 L0.5 0.5 L0.5 9 L2 9 M9 0.5 L10.5 0.5 L10.5 9 L9 9" fill="none" stroke="#ddd" stroke-width="0.8"/><path d="M2.5 4.8 L8.5 4.8 M4 3.3 L2.5 4.8 L4 6.3 M7 3.3 L8.5 4.8 L7 6.3" fill="none" stroke="#ddd" stroke-width="0.8"/></svg>
<svg style="left:203.5px;top:263.5px;" width="10" height="10" viewBox="0 0 10 10"><path d="M5 0.5 L5 9.5 M0.5 5 L9.5 5" fill="none" stroke="#d8d8d8" stroke-width="0.8"/><path d="M3.6 1.8 L5 0.3 L6.4 1.8 Z M3.6 8.2 L5 9.7 L6.4 8.2Z M1.8 3.6 L0.3 5 L1.8 6.4Z M8.2 3.6 L9.7 5 L8.2 6.4Z" fill="#e0e0e0"/><rect x="3.3" y="3.3" width="3.4" height="3.4" fill="none" stroke="#d8d8d8" stroke-width="0.8"/></svg>
<div class="a" style="left:219px;top:259px;width:1px;height:19px;background:#3a3d41;"></div>
<div class="t" style="left:228.3px;top:264.4px;color:#cfcfcf;font-size:7.4px;transform:scaleX(0.82);-webkit-text-stroke:0.15px #cfcfcf;"><span style="display:inline-block;width:4.683px;text-align:center">0</span><span style="display:inline-block;width:4.683px;text-align:center">0</span><span style="display:inline-block;width:4.683px;text-align:center">:</span><span style="display:inline-block;width:4.683px;text-align:center">0</span><span style="display:inline-block;width:4.683px;text-align:center">0</span><span style="display:inline-block;width:4.683px;text-align:center">:</span><span style="display:inline-block;width:4.683px;text-align:center">5</span><span style="display:inline-block;width:4.683px;text-align:center">6</span><span style="display:inline-block;width:4.683px;text-align:center">,</span><span style="display:inline-block;width:4.683px;text-align:center">1</span><span style="display:inline-block;width:4.683px;text-align:center">5</span><span style="display:inline-block;width:4.683px;text-align:center">&nbsp;</span><span style="display:inline-block;width:4.683px;text-align:center">/</span><span style="display:inline-block;width:4.683px;text-align:center">&nbsp;</span><span style="display:inline-block;width:4.683px;text-align:center">0</span><span style="display:inline-block;width:4.683px;text-align:center">0</span><span style="display:inline-block;width:4.683px;text-align:center">:</span><span style="display:inline-block;width:4.683px;text-align:center">0</span><span style="display:inline-block;width:4.683px;text-align:center">0</span><span style="display:inline-block;width:4.683px;text-align:center">:</span><span style="display:inline-block;width:4.683px;text-align:center">0</span><span style="display:inline-block;width:4.683px;text-align:center">0</span><span style="display:inline-block;width:4.683px;text-align:center">,</span><span style="display:inline-block;width:4.683px;text-align:center">0</span><span style="display:inline-block;width:4.683px;text-align:center">0</span></div>
<svg style="left:332.5px;top:266.5px;" width="7" height="4" viewBox="0 0 7 4"><path d="M0.5 0.5 L3.3 3.2 L6.1 0.5" fill="none" stroke="#cfcfcf" stroke-width="0.9"/></svg>
<div class="a" style="left:345px;top:259px;width:1px;height:19px;background:#3a3d41;"></div>
<svg style="left:351.5px;top:264px;" width="11" height="10" viewBox="0 0 11 10"><rect x="0.6" y="0.6" width="9.2" height="8.8" rx="1" fill="#2a2a2a" stroke="#bdbdbd" stroke-width="1"/><rect x="5.2" y="1.1" width="4.1" height="3.9" fill="#8a8a8a"/><rect x="1.1" y="5" width="4.1" height="3.9" fill="#9a9a9a"/><rect x="1.1" y="1.1" width="4.1" height="3.9" fill="#1e1e1e"/><rect x="5.2" y="5" width="4.1" height="3.9" fill="#141414"/></svg>
<svg style="left:370px;top:264px;" width="11" height="8" viewBox="0 0 11 8"><path d="M4 0.3 L7 0.3 L5.5 1.9Z" fill="#3daee9"/><path d="M1.3 5.5 L9.5 5.5" stroke="#ddd" stroke-width="0.8"/><circle cx="1.4" cy="5.5" r="1.2" fill="#eee"/><circle cx="9.4" cy="5.5" r="1.2" fill="#eee"/><circle cx="5.5" cy="4.6" r="1.7" fill="#3daee9"/></svg>
<svg style="left:389.5px;top:264px;" width="11" height="8" viewBox="0 0 11 8"><path d="M4 0.3 L7 0.3 L5.5 1.9Z" fill="#3daee9"/><rect x="3.3" y="2.8" width="4.4" height="2.6" rx="0.6" fill="#3daee9"/><rect x="0" y="5.3" width="10.5" height="2" fill="#eee"/></svg>
<svg style="left:408px;top:266px;" width="11" height="6" viewBox="0 0 11 6"><path d="M1.3 3.3 L9.3 3.3" stroke="#ccc" stroke-width="0.7"/><circle cx="1.4" cy="3.3" r="1.2" fill="#eee"/><circle cx="9.3" cy="3.3" r="1.3" fill="#eee"/><rect x="4.4" y="2.2" width="2.2" height="2.2" fill="#d83a3a"/></svg>
<svg style="left:427px;top:266px;" width="11" height="6" viewBox="0 0 11 6"><path d="M1.3 3.3 L9.3 3.3" stroke="#ccc" stroke-width="0.7"/><circle cx="1.4" cy="3.3" r="1.2" fill="#eee"/><rect x="8.3" y="1.9" width="1.6" height="2.8" fill="#eee"/><rect x="4.4" y="2.2" width="2.2" height="2.2" fill="#d83a3a"/></svg>
<div class="a" style="left:443px;top:259px;width:1px;height:19px;background:#3a3d41;"></div>
<svg style="left:453px;top:264px;" width="10" height="9" viewBox="0 0 10 9"><path d="M4.4 0.5 L5.6 3.4 L8.6 3.5 L6.3 5.4 L7.1 8.4 L4.4 6.7 L1.7 8.4 L2.5 5.4 L0.2 3.5 L3.2 3.4Z" fill="none" stroke="#ddd" stroke-width="0.9"/></svg>
<div class="a" style="left:472px;top:259px;width:1px;height:19px;background:#3a3d41;"></div>
<svg style="left:478px;top:263.5px;" width="11" height="11" viewBox="0 0 11 11"><circle cx="5.2" cy="5.2" r="4.5" fill="none" stroke="#ddd" stroke-width="0.9"/><circle cx="5.2" cy="5.2" r="2.4" fill="#eee"/><circle cx="5.2" cy="5.2" r="1.5" fill="#e03c3c"/></svg>
<svg style="left:495px;top:266.5px;" width="7" height="4" viewBox="0 0 7 4"><path d="M0.5 0.5 L3.3 3.2 L6.1 0.5" fill="none" stroke="#cfcfcf" stroke-width="0.9"/></svg>
<div class="a" style="left:506px;top:259px;width:1px;height:19px;background:#3a3d41;"></div>
<svg style="left:512.5px;top:265px;" width="10" height="8" viewBox="0 0 10 8"><rect x="0" y="1" width="10" height="1" fill="#ddd"/><rect x="0" y="5.5" width="10" height="1" fill="#ddd"/><rect x="6" y="0" width="1" height="3" fill="#ddd"/><rect x="3" y="4.5" width="1" height="3" fill="#ddd"/></svg>
<svg style="left:531px;top:264.5px;" width="11" height="9" viewBox="0 0 11 9"><rect x="0.5" y="0.5" width="9.5" height="7.5" fill="none" stroke="#ddd" stroke-width="0.9"/><rect x="2" y="4.5" width="6.5" height="1.2" fill="#ddd"/></svg>
<div class="a" style="left:0px;top:282px;width:610px;height:23px;background:#232629;"></div>
<div class="t" style="left:37px;top:291.1px;color:#e4e4e4;font-size:8px;letter-spacing:0.24px;transform:scaleX(0.77);-webkit-text-stroke:0.2px currentColor;">Master</div>
<div class="a" style="left:93px;top:304px;width:517px;height:1px;background:#3a3d41;"></div>
<div class="t" style="left:93.0px;top:291.1px;color:#d4d4d4;font-size:7.2px;letter-spacing:0.6px;transform:scaleX(0.7);overflow:hidden;">00:00:00;00</div>
<div class="a" style="left:93px;top:299px;width:1px;height:4.5px;background:#6e7073;"></div>
<div class="a" style="left:113px;top:301.5px;width:1px;height:2px;background:#6e7073;"></div>
<div class="t" style="left:132.6px;top:291.1px;color:#d4d4d4;font-size:7.2px;letter-spacing:0.6px;transform:scaleX(0.7);overflow:hidden;">00:00:05;00</div>
<div class="a" style="left:133px;top:299px;width:1px;height:4.5px;background:#6e7073;"></div>
<div class="a" style="left:152px;top:301.5px;width:1px;height:2px;background:#6e7073;"></div>
<div class="t" style="left:172.2px;top:291.1px;color:#d4d4d4;font-size:7.2px;letter-spacing:0.6px;transform:scaleX(0.7);overflow:hidden;">00:00:10;00</div>
<div class="a" style="left:172px;top:299px;width:1px;height:4.5px;background:#6e7073;"></div>
<div class="a" style="left:192px;top:301.5px;width:1px;height:2px;background:#6e7073;"></div>
<div class="t" style="left:211.8px;top:291.1px;color:#d4d4d4;font-size:7.2px;letter-spacing:0.6px;transform:scaleX(0.7);overflow:hidden;">00:00:15;00</div>
<div class="a" style="left:212px;top:299px;width:1px;height:4.5px;background:#6e7073;"></div>
<div class="a" style="left:232px;top:301.5px;width:1px;height:2px;background:#6e7073;"></div>
<div class="t" style="left:251.4px;top:291.1px;color:#d4d4d4;font-size:7.2px;letter-spacing:0.6px;transform:scaleX(0.7);overflow:hidden;">00:00:20;00</div>
<div class="a" style="left:251px;top:299px;width:1px;height:4.5px;background:#6e7073;"></div>
<div class="a" style="left:271px;top:301.5px;width:1px;height:2px;background:#6e7073;"></div>
<div class="t" style="left:291.0px;top:291.1px;color:#d4d4d4;font-size:7.2px;letter-spacing:0.6px;transform:scaleX(0.7);overflow:hidden;">00:00:25;00</div>
<div class="a" style="left:291px;top:299px;width:1px;height:4.5px;background:#6e7073;"></div>
<div class="a" style="left:311px;top:301.5px;width:1px;height:2px;background:#6e7073;"></div>
<div class="t" style="left:330.6px;top:291.1px;color:#d4d4d4;font-size:7.2px;letter-spacing:0.6px;transform:scaleX(0.7);overflow:hidden;">00:00:30;00</div>
<div class="a" style="left:331px;top:299px;width:1px;height:4.5px;background:#6e7073;"></div>
<div class="a" style="left:350px;top:301.5px;width:1px;height:2px;background:#6e7073;"></div>
<div class="t" style="left:370.2px;top:291.1px;color:#d4d4d4;font-size:7.2px;letter-spacing:0.6px;transform:scaleX(0.7);overflow:hidden;">00:00:35;00</div>
<div class="a" style="left:370px;top:299px;width:1px;height:4.5px;background:#6e7073;"></div>
<div class="a" style="left:390px;top:301.5px;width:1px;height:2px;background:#6e7073;"></div>
<div class="t" style="left:409.8px;top:291.1px;color:#d4d4d4;font-size:7.2px;letter-spacing:0.6px;transform:scaleX(0.7);overflow:hidden;">00:00:40;00</div>
<div class="a" style="left:410px;top:299px;width:1px;height:4.5px;background:#6e7073;"></div>
<div class="a" style="left:430px;top:301.5px;width:1px;height:2px;background:#6e7073;"></div>
<div class="t" style="left:449.4px;top:291.1px;color:#d4d4d4;font-size:7.2px;letter-spacing:0.6px;transform:scaleX(0.7);overflow:hidden;">00:00:45;00</div>
<div class="a" style="left:449px;top:299px;width:1px;height:4.5px;background:#6e7073;"></div>
<div class="a" style="left:469px;top:301.5px;width:1px;height:2px;background:#6e7073;"></div>
<div class="t" style="left:489.0px;top:291.1px;color:#d4d4d4;font-size:7.2px;letter-spacing:0.6px;transform:scaleX(0.7);overflow:hidden;">00:00:50;00</div>
<div class="a" style="left:489px;top:299px;width:1px;height:4.5px;background:#6e7073;"></div>
<div class="a" style="left:509px;top:301.5px;width:1px;height:2px;background:#6e7073;"></div>
<div class="t" style="left:528.6px;top:291.1px;color:#d4d4d4;font-size:7.2px;letter-spacing:0.6px;transform:scaleX(0.7);overflow:hidden;">00:00:55;00</div>
<div class="a" style="left:529px;top:299px;width:1px;height:4.5px;background:#6e7073;"></div>
<div class="a" style="left:548px;top:301.5px;width:1px;height:2px;background:#6e7073;"></div>
<div class="t" style="left:568.2px;top:291.1px;color:#d4d4d4;font-size:7.2px;letter-spacing:0.6px;transform:scaleX(0.7);overflow:hidden;">00:01:00;02</div>
<div class="a" style="left:568px;top:299px;width:1px;height:4.5px;background:#6e7073;"></div>
<div class="a" style="left:588px;top:301.5px;width:1px;height:2px;background:#6e7073;"></div>
<div class="t" style="left:607.8px;top:291.1px;color:#d4d4d4;font-size:7.2px;letter-spacing:0.6px;transform:scaleX(0.7);overflow:hidden;width:1px;">00:01:05;02</div>
<div class="a" style="left:608px;top:299px;width:1px;height:4.5px;background:#6e7073;"></div>
<div class="a" style="left:628px;top:301.5px;width:1px;height:2px;background:#6e7073;"></div>
<svg style="left:93px;top:297.5px;" width="5" height="6" viewBox="0 0 5 6"><path d="M0 0 L4.5 0 L0 5.5Z" fill="#f0f0f0"/></svg>
<div class="a" style="left:0px;top:305px;width:610px;height:2px;background:#232629;"></div>
<div class="a" style="left:0px;top:307px;width:610px;height:36px;background:#1c1e21;"></div>
<div class="a" style="left:0px;top:343px;width:610px;height:34px;background:#213b4b;"></div>
<div class="a" style="left:0px;top:377px;width:610px;height:35px;background:#211f25;"></div>
<div class="a" style="left:0px;top:412px;width:610px;height:1px;background:#19181c;"></div>
<div class="a" style="left:0px;top:342px;width:610px;height:1px;background:#19191c;"></div>
<div class="a" style="left:0px;top:377px;width:610px;height:1px;background:#19181c;"></div>
<div class="a" style="left:0px;top:413px;width:610px;height:35px;background:#211f25;"></div>
<div class="a" style="left:0px;top:448px;width:610px;height:23px;background:#232629;"></div>
<div class="a" style="left:92.6px;top:305px;width:1.6px;height:143px;background:#cfcfcf;"></div>
<div class="a" style="left:93px;top:303px;width:20px;height:4px;background:#3580b0;"></div>
<div class="a" style="left:93px;top:303px;width:2px;height:4px;background:#2a6a94;"></div>
<div class="a" style="left:111px;top:303px;width:2px;height:4px;background:#2a6a94;"></div>
<div class="a" style="left:100.8px;top:303.2px;width:4px;height:3.6px;background:#dfeaf2;"></div>
<div class="a" style="left:102.3px;top:304.5px;width:1.2px;height:1.2px;background:#1f5a80;"></div>
<div class="a" style="left:113px;top:301px;width:1px;height:3px;background:#6e7073;"></div>
<div class="a" style="left:93px;top:466.8px;width:113px;height:4.8px;background:#66696c;border-radius:2.4px"></div>
<svg style="left:12px;top:311.5px;" width="12" height="7" viewBox="0 0 12 7"><path d="M0.5 0.6 L5.8 6 L11.1 0.6" fill="none" stroke="#b8b8b8" stroke-width="0.9"/></svg>
<div class="a" style="left:25.8px;top:307.7px;width:9.5px;height:14.3px;background:#47d683;"></div>
<div class="t" style="left:26.8px;top:310.8px;color:#14472a;font-size:7.2px;letter-spacing:0px;transform:scaleX(0.8);-webkit-text-stroke:0.2px #14472a;">V2</div>
<svg style="left:44px;top:307px;" width="14" height="14" viewBox="0 0 14 14"><path d="M4.6 11.6 L11.9 4.4" stroke="#b4b4b4" stroke-width="2.1" stroke-linecap="square"/><circle cx="4.3" cy="3.6" r="0.55" fill="#999"/><circle cx="7.3" cy="3.3" r="0.55" fill="#999"/><circle cx="5.7" cy="6.0" r="0.6" fill="#aaa"/></svg>
<svg style="left:61px;top:307px;" width="13" height="14" viewBox="0 0 13 14"><path fill-rule="evenodd" fill="#e8e8e8" d="M1.6 3 H11.8 V13 H1.6Z M3.2 4.5 H10.2 V7.1 H3.2Z M3.2 8.6 H10.2 V11.6 H3.2Z"/></svg>
<svg style="left:78px;top:307px;" width="10" height="14" viewBox="0 0 10 14"><path d="M3.1 8.3 L3.1 5.8 A1.9 1.9 0 0 1 6.9 5.8 L6.9 6.4" fill="none" stroke="#d0d0d0" stroke-width="1"/><rect x="1.6" y="8.4" width="7.2" height="4" rx="0.7" fill="none" stroke="#d0d0d0" stroke-width="1"/></svg>
<svg style="left:12px;top:347.7px;" width="12" height="7" viewBox="0 0 12 7"><path d="M0.5 0.6 L5.8 6 L11.1 0.6" fill="none" stroke="#b8b8b8" stroke-width="0.9"/></svg>
<div class="a" style="left:25.8px;top:343.9px;width:9.5px;height:14.3px;background:#47d683;"></div>
<div class="t" style="left:26.8px;top:347.0px;color:#14472a;font-size:7.2px;letter-spacing:0px;transform:scaleX(0.8);-webkit-text-stroke:0.2px #14472a;">V1</div>
<svg style="left:44px;top:343.2px;" width="14" height="14" viewBox="0 0 14 14"><path d="M4.6 11.6 L11.9 4.4" stroke="#b4b4b4" stroke-width="2.1" stroke-linecap="square"/><circle cx="4.3" cy="3.6" r="0.55" fill="#999"/><circle cx="7.3" cy="3.3" r="0.55" fill="#999"/><circle cx="5.7" cy="6.0" r="0.6" fill="#aaa"/></svg>
<svg style="left:61px;top:343.2px;" width="13" height="14" viewBox="0 0 13 14"><path fill-rule="evenodd" fill="#e8e8e8" d="M1.6 3 H11.8 V13 H1.6Z M3.2 4.5 H10.2 V7.1 H3.2Z M3.2 8.6 H10.2 V11.6 H3.2Z"/></svg>
<svg style="left:78px;top:343.2px;" width="10" height="14" viewBox="0 0 10 14"><path d="M3.1 8.3 L3.1 5.8 A1.9 1.9 0 0 1 6.9 5.8 L6.9 6.4" fill="none" stroke="#d0d0d0" stroke-width="1"/><rect x="1.6" y="8.4" width="7.2" height="4" rx="0.7" fill="none" stroke="#d0d0d0" stroke-width="1"/></svg>
<svg style="left:12px;top:382.0px;" width="12" height="7" viewBox="0 0 12 7"><path d="M0.5 0.6 L5.8 6 L11.1 0.6" fill="none" stroke="#b8b8b8" stroke-width="0.9"/></svg>
<div class="a" style="left:25.8px;top:378.2px;width:9.5px;height:14.3px;background:#47d683;"></div>
<div class="t" style="left:26.8px;top:381.3px;color:#14472a;font-size:7.2px;letter-spacing:0px;transform:scaleX(0.8);-webkit-text-stroke:0.2px #14472a;">A1</div>
<svg style="left:44px;top:377.5px;" width="14" height="14" viewBox="0 0 14 14"><path d="M4.6 11.6 L11.9 4.4" stroke="#b4b4b4" stroke-width="2.1" stroke-linecap="square"/><circle cx="4.3" cy="3.6" r="0.55" fill="#999"/><circle cx="7.3" cy="3.3" r="0.55" fill="#999"/><circle cx="5.7" cy="6.0" r="0.6" fill="#aaa"/></svg>
<svg style="left:61px;top:377.5px;" width="13" height="14" viewBox="0 0 13 14"><path d="M1.3 5.9 L3.8 5.9 L7 3.3 L7 12.4 L3.8 9.9 L1.3 9.9Z" fill="#efefef"/><path d="M8.4 5.7 Q9.9 7.85 8.4 10 M10 4.3 Q12.7 7.85 10 11.4" fill="none" stroke="#e4e4e4" stroke-width="1.1"/></svg>
<svg style="left:78px;top:377.5px;" width="10" height="14" viewBox="0 0 10 14"><path d="M3.1 8.3 L3.1 5.8 A1.9 1.9 0 0 1 6.9 5.8 L6.9 6.4" fill="none" stroke="#d0d0d0" stroke-width="1"/><rect x="1.6" y="8.4" width="7.2" height="4" rx="0.7" fill="none" stroke="#d0d0d0" stroke-width="1"/></svg>
<svg style="left:12px;top:417.3px;" width="12" height="7" viewBox="0 0 12 7"><path d="M0.5 0.6 L5.8 6 L11.1 0.6" fill="none" stroke="#b8b8b8" stroke-width="0.9"/></svg>
<div class="a" style="left:25.8px;top:413.5px;width:9.5px;height:14.3px;background:#47d683;"></div>
<div class="t" style="left:26.8px;top:416.6px;color:#14472a;font-size:7.2px;letter-spacing:0px;transform:scaleX(0.8);-webkit-text-stroke:0.2px #14472a;">A2</div>
<svg style="left:44px;top:412.8px;" width="14" height="14" viewBox="0 0 14 14"><path d="M4.6 11.6 L11.9 4.4" stroke="#b4b4b4" stroke-width="2.1" stroke-linecap="square"/><circle cx="4.3" cy="3.6" r="0.55" fill="#999"/><circle cx="7.3" cy="3.3" r="0.55" fill="#999"/><circle cx="5.7" cy="6.0" r="0.6" fill="#aaa"/></svg>
<svg style="left:61px;top:412.8px;" width="13" height="14" viewBox="0 0 13 14"><path d="M1.3 5.9 L3.8 5.9 L7 3.3 L7 12.4 L3.8 9.9 L1.3 9.9Z" fill="#efefef"/><path d="M8.4 5.7 Q9.9 7.85 8.4 10 M10 4.3 Q12.7 7.85 10 11.4" fill="none" stroke="#e4e4e4" stroke-width="1.1"/></svg>
<svg style="left:78px;top:412.8px;" width="10" height="14" viewBox="0 0 10 14"><path d="M3.1 8.3 L3.1 5.8 A1.9 1.9 0 0 1 6.9 5.8 L6.9 6.4" fill="none" stroke="#d0d0d0" stroke-width="1"/><rect x="1.6" y="8.4" width="7.2" height="4" rx="0.7" fill="none" stroke="#d0d0d0" stroke-width="1"/></svg>
<div class="t" style="left:80px;top:400.3px;color:#e0e0e0;font-size:8px;letter-spacing:0.24px;transform:scaleX(0.77);-webkit-text-stroke:0.2px currentColor;">X1</div>
<div class="a" style="left:609px;top:255px;width:1px;height:216px;background:#1a1b1e;"></div>
<div class="a" style="left:610px;top:255px;width:1px;height:216px;background:#3a3d41;"></div>
<div class="a" style="left:611px;top:255px;width:214px;height:200px;background:#232629;"></div>
<div class="a" style="left:611px;top:455px;width:214px;height:16px;background:#232629;"></div>
<div class="a" style="left:611px;top:455px;width:44px;height:16px;background:#1b1c1f;border-top:1px solid #2e3134;border-left:1px solid #2e3134"></div>
<div class="a" style="left:729px;top:455px;width:94px;height:16px;background:#1b1c1f;border-top:1px solid #2e3134;border-right:1px solid #2e3134"></div>
<div class="a" style="left:655px;top:455px;width:74px;height:16px;background:#1f2124;"></div>
<div class="a" style="left:823px;top:455px;width:2px;height:1px;background:#2e3134;"></div>
<div class="a" style="left:655.5px;top:469.3px;width:73px;height:2px;background:#3daee9;border-radius:1px"></div>
<div class="t" style="left:615px;top:458.7px;color:#e4e4e4;font-size:8px;letter-spacing:0.24px;transform:scaleX(0.77);-webkit-text-stroke:0.2px currentColor;">Audio Mixer</div>
<div class="t" style="left:659.6px;top:458.7px;color:#e4e4e4;font-size:8px;letter-spacing:0.24px;transform:scaleX(0.77);-webkit-text-stroke:0.2px currentColor;">Effect/Composition ...</div>
<div class="t" style="left:734px;top:458.7px;color:#e4e4e4;font-size:8px;letter-spacing:0.24px;transform:scaleX(0.77);-webkit-text-stroke:0.2px currentColor;">Time Remap...</div>
<div class="t" style="left:789.7px;top:458.7px;color:#e4e4e4;font-size:8px;letter-spacing:0.24px;transform:scaleX(0.77);-webkit-text-stroke:0.2px currentColor;">Subtitles</div>
<div class="a" style="left:0px;top:471px;width:825px;height:1px;background:#34373b;"></div>
<div class="a" style="left:0px;top:472px;width:825px;height:18px;background:#202326;"></div>
<div class="t" style="left:602px;top:476.6px;color:#e4e4e4;font-size:8px;letter-spacing:0.24px;transform:scaleX(0.77);-webkit-text-stroke:0.2px currentColor;">Select</div>
<div class="a" style="left:628px;top:474px;width:1px;height:14px;background:#34373b;"></div>
<div class="a" style="left:631px;top:473.8px;width:14px;height:14px;background:#282b2f;border:1px solid #33363a;border-radius:3px"></div>
<div class="a" style="left:646.5px;top:473.8px;width:14px;height:14px;background:#282b2f;border:1px solid #33363a;border-radius:3px"></div>
<div class="a" style="left:662px;top:473.8px;width:14px;height:14px;background:#282b2f;border:1px solid #33363a;border-radius:3px"></div>
<div class="a" style="left:677.5px;top:473.8px;width:14px;height:14px;background:#282b2f;border:1px solid #33363a;border-radius:3px"></div>
<div class="a" style="left:693px;top:473.8px;width:14px;height:14px;background:#282b2f;border:1px solid #33363a;border-radius:3px"></div>
<svg style="left:634px;top:477px;" width="9" height="9" viewBox="0 0 9 9"><path d="M0.5 0.5 L4.5 0.5 L8.5 4.5 L4.5 8.5 L0.5 4.5Z" fill="#eee"/><circle cx="2.5" cy="2.5" r="0.9" fill="#2e3134"/></svg>
<svg style="left:650px;top:477px;" width="8" height="8" viewBox="0 0 8 8"><rect x="0.6" y="0.6" width="6.6" height="6.6" fill="none" stroke="#eee" stroke-width="1.2"/><rect x="0.6" y="3.4" width="6.6" height="1.1" fill="#eee"/></svg>
<svg style="left:665px;top:477.5px;" width="9" height="8" viewBox="0 0 9 8"><path d="M4.5 0.5 L8 4 L4.5 7.5 L1 4Z" fill="#eee"/><rect x="0" y="3.5" width="9" height="1" fill="#eee"/></svg>
<svg style="left:681px;top:477px;" width="8" height="9" viewBox="0 0 8 9"><rect x="0.5" y="0" width="1" height="9" fill="#eee"/><path d="M1.5 0.5 L7.5 0.5 L5.5 2.5 L7.5 4.5 L1.5 4.5Z" fill="#eee"/></svg>
<svg style="left:696px;top:477px;" width="9" height="9" viewBox="0 0 9 9"><path d="M1.3 8 L1.3 4 A3.2 3.2 0 0 1 7.7 4 L7.7 6" fill="none" stroke="#eee" stroke-width="1.2"/><circle cx="7.7" cy="7.2" r="1.3" fill="#3daee9"/></svg>
<div class="a" style="left:710.5px;top:474px;width:1px;height:14px;background:#34373b;"></div>
<svg style="left:716px;top:477px;" width="9" height="9" viewBox="0 0 9 9"><circle cx="3.6" cy="3.6" r="3" fill="none" stroke="#ccc" stroke-width="0.9"/><path d="M5.8 5.8 L8.2 8.2" stroke="#ccc" stroke-width="1"/><rect x="2" y="2" width="3.2" height="3.2" fill="none" stroke="#ccc" stroke-width="0.7"/></svg>
<svg style="left:732px;top:477px;" width="9" height="9" viewBox="0 0 9 9"><circle cx="3.6" cy="3.6" r="3" fill="none" stroke="#ddd" stroke-width="0.9"/><path d="M5.8 5.8 L8.2 8.2" stroke="#ddd" stroke-width="1"/><rect x="2" y="3.2" width="3.2" height="0.9" fill="#ddd"/></svg>
<div class="a" style="left:743px;top:479.5px;width:30px;height:2px;background:#4a4d51;border-radius:1px"></div>
<div class="a" style="left:775px;top:479.3px;width:23px;height:2.6px;background:#3daee9;border-radius:1.3px"></div>
<svg style="left:770px;top:476px;" width="10" height="10" viewBox="0 0 10 10"><circle cx="5" cy="4.6" r="4.3" fill="#2e3134" stroke="#45484c" stroke-width="0.8"/></svg>
<svg style="left:802px;top:477px;" width="9" height="9" viewBox="0 0 9 9"><circle cx="3.6" cy="3.6" r="3" fill="none" stroke="#ddd" stroke-width="0.9"/><path d="M5.8 5.8 L8.2 8.2" stroke="#ddd" stroke-width="1"/><rect x="2" y="3.2" width="3.2" height="0.9" fill="#ddd"/><rect x="3.15" y="2" width="0.9" height="3.2" fill="#ddd"/></svg>
<div class="a" style="left:0;top:0;width:825px;height:490px;border:1px solid #b4b4b4;border-radius:4px;pointer-events:none"></div>
<div class="a" style="left:0px;top:355px;width:1px;height:20px;background:#3a6a90;"></div>
</body></html>
